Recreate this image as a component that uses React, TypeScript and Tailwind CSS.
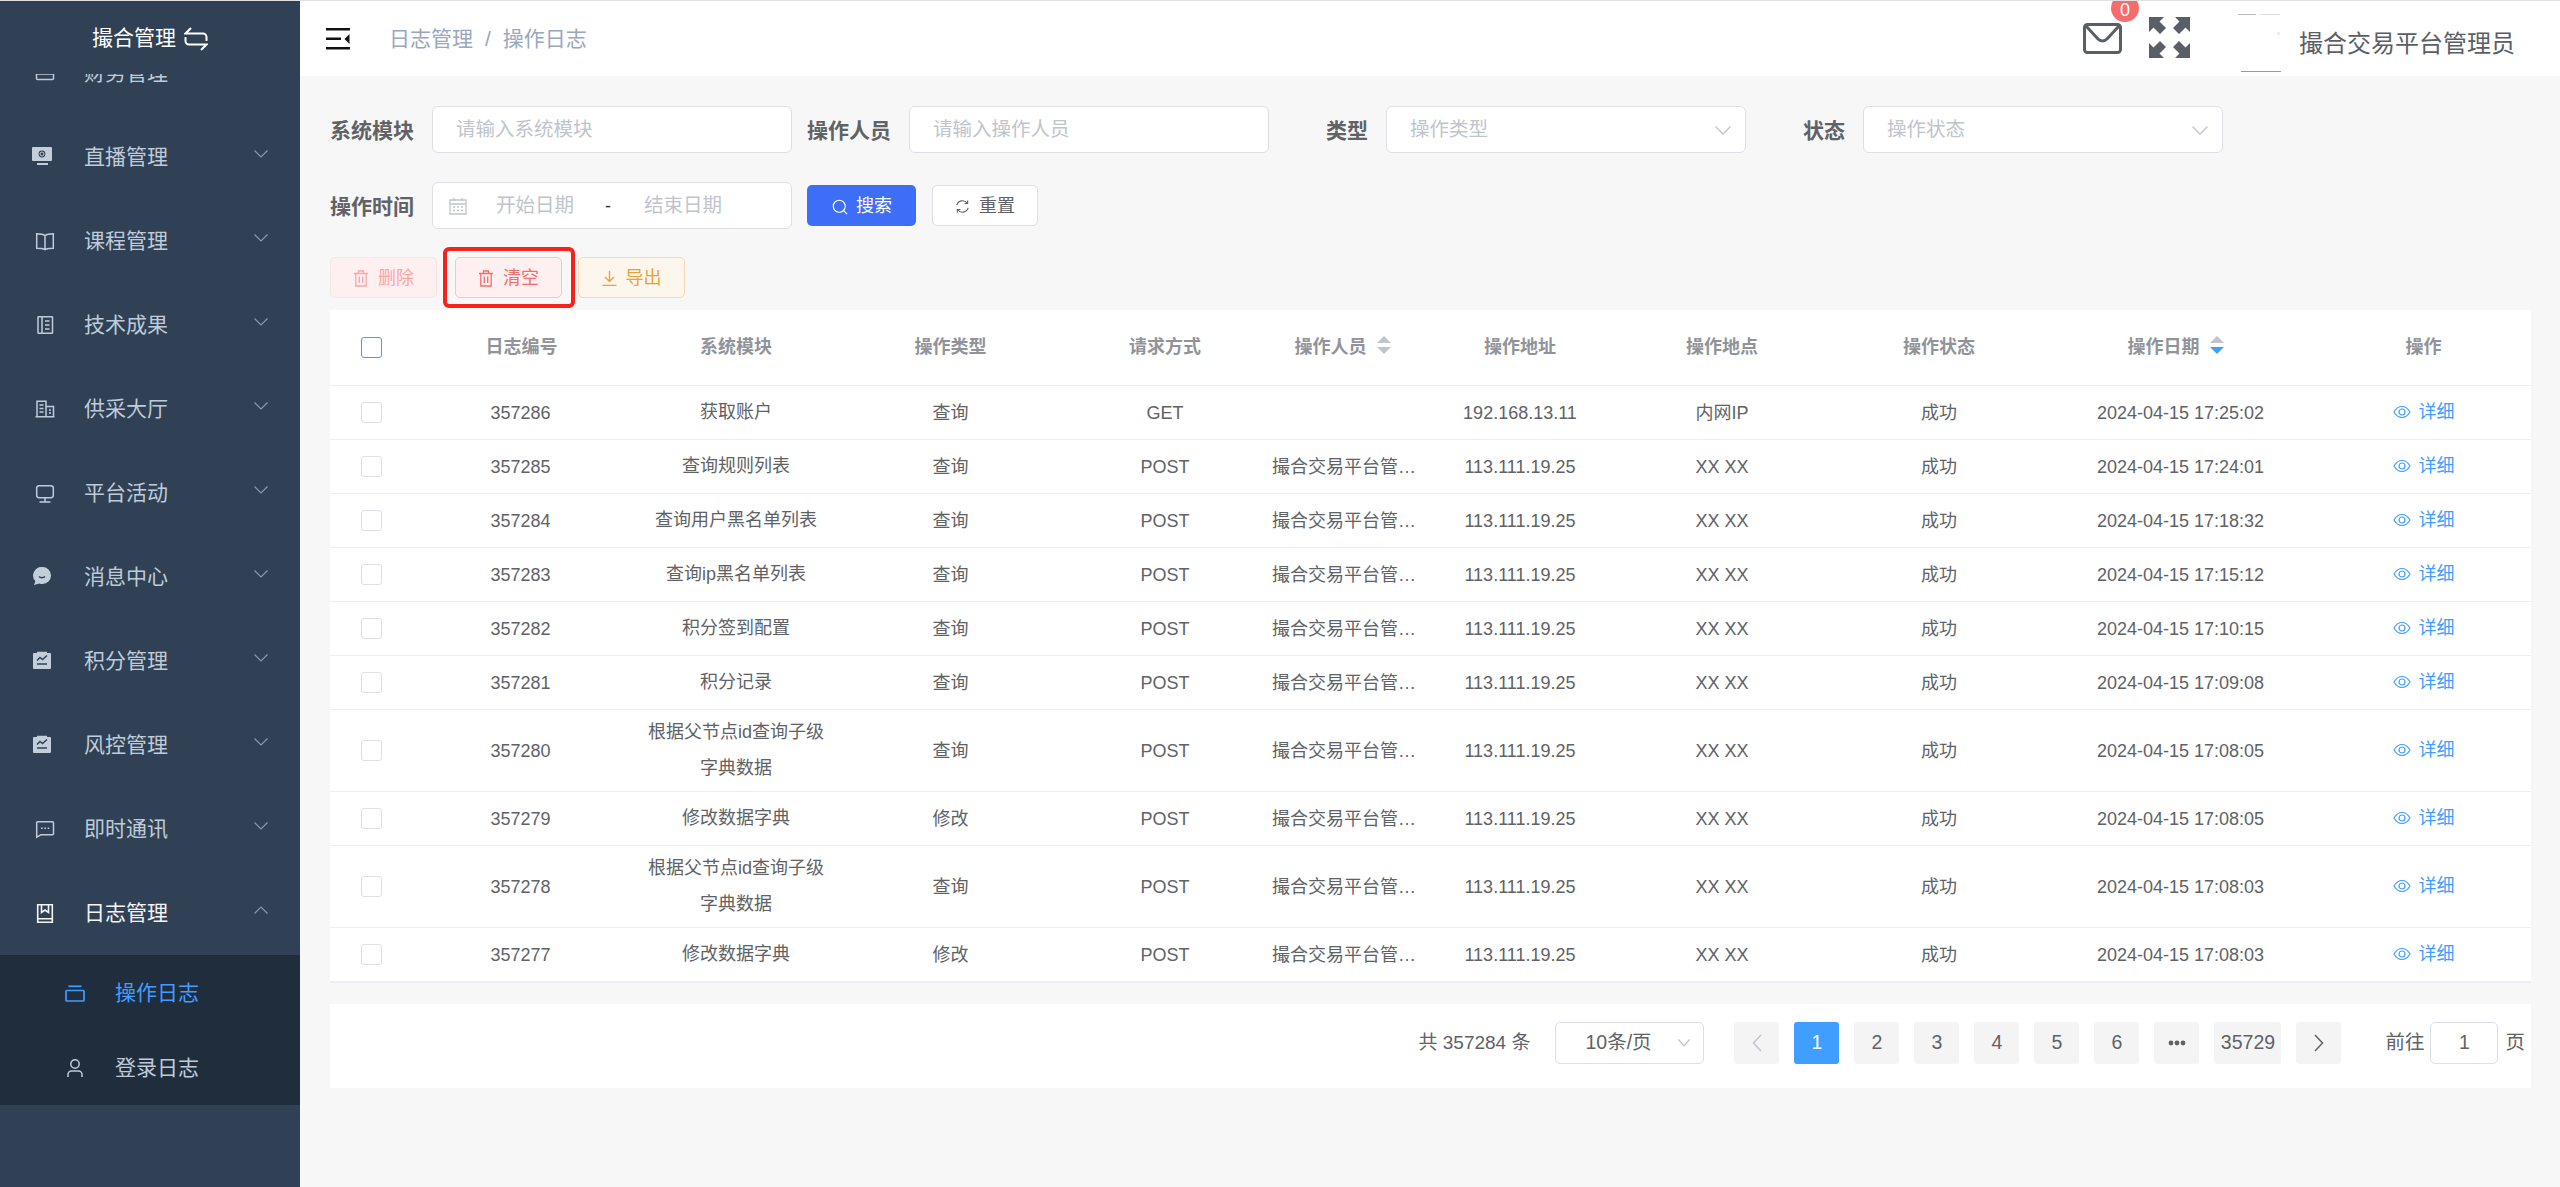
import React from "react";
import { Search } from "lucide-react";

type SvgProps = { children: React.ReactNode; className?: string };
const Ico = ({ children, className = "" }: SvgProps) => (
  <svg viewBox="0 0 24 24" fill="none" stroke="currentColor" strokeWidth="1.5" className={`w-[24px] h-[24px] shrink-0 ${className}`}>
    {children}
  </svg>
);

const icons: Record<string, React.ReactNode> = {
  finance: <Ico><rect x="4.5" y="3" width="17" height="15.5" rx="1" /><path d="M4.5 13h17" /></Ico>,
  live: (
    <Ico>
      <path fill="#c3cedb" stroke="none" fillRule="evenodd" d="M1 2h18a1 1 0 0 1 1 1v12a1 1 0 0 1-1 1H1a1 1 0 0 1-1-1V3a1 1 0 0 1 1-1Zm9 3.6a3.4 3.4 0 1 0 0 6.8 3.4 3.4 0 0 0 0-6.8Z" />
      <circle cx="10" cy="9" r="2" fill="#304156" stroke="#c3cedb" strokeWidth="1" />
      <rect x="5" y="18" width="11" height="2" fill="#c3cedb" stroke="none" />
    </Ico>
  ),
  course: <Ico><path d="M13 6.5C11 5 8 4.7 4.7 4.7v14.6c3.3 0 6.3.3 8.3 1.2 2-.9 5-1.2 8.3-1.2V4.7C18 4.7 15 5 13 6.5Zm0 0v14" /></Ico>,
  tech: <Ico><rect x="6" y="3.7" width="14.5" height="16.6" rx=".6" /><path d="M10 3.7v16.6M13 8h4.5M13 12h4.5M13 16h4.5" /></Ico>,
  supply: <Ico><path d="M5 19.5V4.2h9v15.3M14 9.5h7.5v10M3.5 19.8h19M7.5 8h4M7.5 11.5h4M7.5 15h4M17 13h2M17 16h2" /></Ico>,
  monitor: <Ico><rect x="4.7" y="4.7" width="16.6" height="12" rx="2.4" /><path d="M13 16.7v4M7.5 21h11" /></Ico>,
  chat: (
    <Ico>
      <path fill="#c3cedb" stroke="none" d="M10.5 2a8.5 8.5 0 0 1 0 17c-1.1 0-2.200-.2-3.100-.6L2 20l1.400-3.800A8.500 8.500 0 0 1 10.500 2Z" />
      <path d="M7 11.500c1.500 1.500 4.500 1.500 6 0" stroke="#304156" strokeWidth="1.500" />
    </Ico>
  ),
  chart: (
    <Ico>
      <path fill="#c3cedb" stroke="none" d="M2 4h3V2.800h10V4h3a1 1 0 0 1 1 1v14a1 1 0 0 1-1 1H2a1 1 0 0 1-1-1V5a1 1 0 0 1 1-1Z" />
      <path d="M5 11.500l3-3 2.500 2 4.500-4" stroke="#304156" strokeWidth="1.500" />
      <path d="M5 15h10" stroke="#304156" strokeWidth="1.500" />
    </Ico>
  ),
  im: <Ico><path d="M5.500 4.700h15a1 1 0 0 1 1 1v11a1 1 0 0 1-1 1H9l-4.300 2.500V5.500a.8.800 0 0 1 .8-.8Z" /><path d="M9 11.200h1.600M12.300 11.200h1.600M15.600 11.200h1.600" strokeWidth="1.600" /></Ico>,
  log: <Ico><path d="M5.700 3.700h14.600v17.600H5.700zM5.700 17.800h14.600M9.500 3.700v7.800l3.500-2.500 3.500 2.500V3.700" strokeWidth="1.600" /></Ico>,
  card: <Ico><rect x="3" y="9.500" width="18" height="10.500" rx=".8" strokeWidth="1.700" /><path d="M5.500 5.300h13" strokeWidth="1.700" /></Ico>,
  user: <Ico><circle cx="12" cy="8" r="4.200" /><path d="M5 21v-2.500a3.500 3.500 0 0 1 3.500-3.500h7a3.500 3.500 0 0 1 3.500 3.500V21" /></Ico>,
};

const Chevron = ({ up = false }: { up?: boolean }) => (
  <svg viewBox="0 0 14 8" fill="none" stroke="#8c97a6" strokeWidth="1.200" className="w-[14px] h-[8px] ml-auto -translate-y-[3px]">
    <path d={up ? "M.5 7.500 7 1l6.500 6.500" : "M.5.500 7 7 13.500.500"} />
  </svg>
);

const menu = [
  ["finance", "财务管理"],
  ["live", "直播管理"],
  ["course", "课程管理"],
  ["tech", "技术成果"],
  ["supply", "供采大厅"],
  ["monitor", "平台活动"],
  ["chat", "消息中心"],
  ["chart", "积分管理"],
  ["chart", "风控管理"],
  ["im", "即时通讯"],
];

const Sidebar = () => (
  <aside className="w-[300px] shrink-0 bg-[#304156] flex flex-col overflow-hidden">
    <div className="h-[73px] shrink-0 flex items-center justify-center gap-[8px] text-white text-[21px] relative z-10 bg-[#304156]">
      <span>撮合管理</span>
      <svg viewBox="0 0 24 24" fill="none" stroke="currentColor" strokeWidth="2" className="w-[24px] h-[24px] mt-[3px]">
        <path d="M7 1 1.500 6.500H19a3.500 3.500 0 0 1 3.500 3.500v4" />
        <path d="M17 23l5.500-5.500H5A3.500 3.500 0 0 1 1.500 14v-4" />
      </svg>
    </div>
    <nav className="flex-1 overflow-hidden">
      <ul className="-mt-[43px]">
        {menu.map(([ic, label]) => (
          <li key={label} className="h-[84px] flex items-center pl-[32px] pr-[32px] text-[21px] text-[#bfcbd9]">
            {icons[ic]}
            <span className="ml-[28px]">{label}</span>
            <Chevron />
          </li>
        ))}
        <li>
          <div className="h-[84px] flex items-center pl-[32px] pr-[32px] text-[21px] text-[#f4f4f5]">
            {icons.log}
            <span className="ml-[28px]">日志管理</span>
            <Chevron up />
          </div>
          <ul className="bg-[#1f2d3d]">
            <li className="h-[75px] flex items-center pl-[63px] text-[21px] text-[#409eff]">
              {icons.card}
              <span className="ml-[28px]">操作日志</span>
            </li>
            <li className="h-[75px] flex items-center pl-[63px] text-[21px] text-[#bfcbd9]">
              {icons.user}
              <span className="ml-[28px]">登录日志</span>
            </li>
          </ul>
        </li>
      </ul>
    </nav>
  </aside>
);

const Corner = ({ t }: { t: string }) => (
  <path transform={t} fill="#5a5e66" d="M0 0H15L10.500 4.500 17 11 11 17 4.500 10.500 0 15Z" />
);

const Header = () => (
  <header className="h-[75px] shrink-0 bg-white flex items-center overflow-hidden">
    <svg viewBox="0 0 24 22" className="ml-[26px] w-[24px] h-[22px]">
      <rect x="0" y="0" width="24" height="2.500" fill="#111" />
      <rect x="0" y="9.500" width="15" height="2.500" fill="#111" />
      <rect x="0" y="19" width="24" height="2.500" fill="#111" />
      <path d="M23.500 6v10l-5-5Z" fill="#111" />
    </svg>
    <nav className="ml-[39px] flex items-center text-[21px] text-[#97a8be]">
      <span>日志管理</span>
      <span className="mx-[12px]">/</span>
      <span>操作日志</span>
    </nav>
    <div className="ml-auto flex items-center pr-[45px]">
      <div className="relative w-[39px] h-[31px]">
        <svg viewBox="0 0 39 31" fill="none" stroke="#5a5e66" strokeWidth="3" className="w-[39px] h-[31px]">
          <rect x="1.500" y="1.500" width="36" height="28" rx="3" />
          <path d="M3 3l12 13c2.500 2.500 6.500 2.500 9 0L36 3" />
        </svg>
        <span className="absolute left-[28px] -top-[29px] w-[28px] h-[28px] pt-[5px] rounded-full bg-[#f56c6c] text-white text-[18px] flex items-center justify-center">0</span>
      </div>
      <svg viewBox="0 0 41 41" className="ml-[27px] w-[41px] h-[41px] -translate-y-[1px]">
        <Corner t="" />
        <Corner t="translate(41 0) scale(-1 1)" />
        <Corner t="translate(0 41) scale(1 -1)" />
        <Corner t="translate(41 41) scale(-1 -1)" />
      </svg>
      <svg viewBox="0 0 60 60" className="ml-[42px] w-[60px] h-[60px] translate-y-[3px]">
        <rect x="6" y="2" width="18" height="1" fill="#bbb" />
        <rect x="28" y="2" width="20" height="1" fill="#ddd" />
        <rect x="45" y="20" width="3" height="3" fill="#e4eef8" />
        <rect x="9" y="59" width="40" height="1" fill="#999" />
      </svg>
      <span className="ml-[7px] text-[24px] text-[#5a5e66] translate-y-[5px]">撮合交易平台管理员</span>
    </div>
  </header>
);

const Down = () => (
  <svg viewBox="0 0 16 9" fill="none" stroke="#c0c4cc" strokeWidth="1.300" className="w-[16px] h-[9px]">
    <path d="M.5.500 8 8 15.500.500" />
  </svg>
);

const Label = ({ children }: { children: React.ReactNode }) => (
  <label className="w-[102px] shrink-0 pr-[18px] pt-[2px] text-right text-[21px] font-semibold text-[#606266] whitespace-nowrap">{children}</label>
);

const Box = "w-[360px] h-[47px] shrink-0 bg-white border border-[#dcdfe6] rounded-[6px] flex items-center pt-[1px] text-[19.5px] text-[#c0c4cc]";

const Field = ({ label, placeholder, select = false }: { label: string; placeholder: string; select?: boolean }) => (
  <div className="flex items-center mr-[15px]">
    <Label>{label}</Label>
    <div className={`${Box} pl-[23px] pr-[14px]`}>
      <span>{placeholder}</span>
      {select && <span className="ml-auto"><Down /></span>}
    </div>
  </div>
);

const Trash = ({ className = "" }: { className?: string }) => (
  <svg viewBox="0 0 16 17" fill="none" stroke="currentColor" strokeWidth="1.300" className={`w-[16px] h-[17px] ${className}`}>
    <path d="M1 3.500h14M5.500 3.500V1h5v2.500M2.800 3.500V16h10.400V3.500M6.300 6.500v6.500M9.700 6.500v6.500" />
  </svg>
);

const Btn = ({ className, children }: { className: string; children: React.ReactNode }) => (
  <button className={`h-[41px] w-[107px] rounded-[5px] border pt-[2px] flex items-center justify-center gap-[9px] text-[18px] ${className}`}>{children}</button>
);

const Filters = () => (
  <div>
    <div className="flex items-center mb-[29px]">
      <Field label="系统模块" placeholder="请输入系统模块" />
      <Field label="操作人员" placeholder="请输入操作人员" />
      <Field label="类型" placeholder="操作类型" select />
      <Field label="状态" placeholder="操作状态" select />
    </div>
    <div className="flex items-center mb-[28px]">
      <Label>操作时间</Label>
      <div className={`${Box} pl-[16px] mr-[15px]`}>
        <svg viewBox="0 0 18 18" fill="none" stroke="#c0c4cc" strokeWidth="1.300" className="w-[18px] h-[18px]">
          <path d="M1 3h16v14H1zM1 7h16M5 1v3M13 1v3" />
          <path d="M4 10h2M8 10h2M12 10h2M4 13.500h2M8 13.500h2M12 13.500h2" />
        </svg>
        <span className="ml-[29px]">开始日期</span>
        <span className="ml-[31px] text-[#303133] text-[18px]">-</span>
        <span className="ml-[33px]">结束日期</span>
      </div>
      <button className="h-[41px] w-[109px] rounded-[5px] bg-[#3e6ef5] pt-[2px] text-white text-[18px] flex items-center justify-center gap-[7px]">
        <Search size={18} strokeWidth={1.500} />
        搜索
      </button>
      <button className="ml-[16px] h-[41px] w-[106px] rounded-[5px] bg-white border border-[#dcdfe6] pt-[2px] text-[#606266] text-[18px] flex items-center justify-center gap-[9px]">
        <svg viewBox="0 0 16 16" fill="none" stroke="currentColor" strokeWidth="1.200" className="w-[15px] h-[15px]">
          <path d="M2 6.500A6.200 6.200 0 0 1 13 4.500M14 9.500A6.200 6.200 0 0 1 3 11.500" />
          <path d="M13.500 1.500v3.300h-3.300M2.500 14.500v-3.300h3.300" />
        </svg>
        重置
      </button>
    </div>
    <div className="flex items-center mb-[12px]">
      <Btn className="bg-[#fef0f0] border-[#fde2e2] text-[#f9a7a7]"><Trash />删除</Btn>
      <div className="relative ml-[18px] mr-[16px]">
        <Btn className="bg-[#fef0f0] border-[#fbc4c4] text-[#f56c6c]"><Trash />清空</Btn>
        <span className="absolute -left-[12px] -right-[13px] -top-[10px] -bottom-[10px] border-[4px] border-[#f5231b] rounded-[6px] pointer-events-none" />
      </div>
      <Btn className="bg-[#fdf6ec] border-[#f5dab1] text-[#e6a23c]">
        <svg viewBox="0 0 15 15" fill="none" stroke="currentColor" strokeWidth="1.300" className="w-[15px] h-[15px]">
          <path d="M7.500 0v10M3 6l4.500 4.500L12 6M0.500 14.300h14" />
        </svg>
        导出
      </Btn>
    </div>
  </div>
);

const Sort = ({ active = false }: { active?: boolean }) => (
  <svg viewBox="0 0 14 18" className="inline-block w-[14px] h-[18px] ml-[10px] align-[-1px]">
    <path d="M7 0l7 7H0Z" fill="#c0c4cc" />
    <path d="M0 11h14l-7 7Z" fill={active ? "#409eff" : "#c0c4cc"} />
  </svg>
);

const Check = ({ on = false }: { on?: boolean }) => (
  <span className={`block mx-auto w-[21px] h-[21px] rounded-[3px] bg-white border ${on ? "border-[#409eff]" : "border-[#dcdfe6]"}`} />
);

const M1 = "根据父节点id查询子级字典数据";
const U = "撮合交易平台管理员";
const rows = [
  ["357286", "获取账户", "查询", "GET", "", "192.168.13.11", "内网IP", "2024-04-15 17:25:02"],
  ["357285", "查询规则列表", "查询", "POST", U, "113.111.19.25", "XX XX", "2024-04-15 17:24:01"],
  ["357284", "查询用户黑名单列表", "查询", "POST", U, "113.111.19.25", "XX XX", "2024-04-15 17:18:32"],
  ["357283", "查询ip黑名单列表", "查询", "POST", U, "113.111.19.25", "XX XX", "2024-04-15 17:15:12"],
  ["357282", "积分签到配置", "查询", "POST", U, "113.111.19.25", "XX XX", "2024-04-15 17:10:15"],
  ["357281", "积分记录", "查询", "POST", U, "113.111.19.25", "XX XX", "2024-04-15 17:09:08"],
  ["357280", M1, "查询", "POST", U, "113.111.19.25", "XX XX", "2024-04-15 17:08:05"],
  ["357279", "修改数据字典", "修改", "POST", U, "113.111.19.25", "XX XX", "2024-04-15 17:08:05"],
  ["357278", M1, "查询", "POST", U, "113.111.19.25", "XX XX", "2024-04-15 17:08:03"],
  ["357277", "修改数据字典", "修改", "POST", U, "113.111.19.25", "XX XX", "2024-04-15 17:08:03"],
];

const th = "h-[76px] border-b border-[#ebeef5] font-semibold text-[#909399] text-center pb-[1px]";
const td = "h-[54px] border-b border-[#ebeef5] text-center";

const Table = () => (
  <table className="w-full table-fixed border-separate border-spacing-0 bg-white text-[18px] leading-[36px] text-[#606266] mb-[21px] border-b border-[#ebeef5]">
    <colgroup>
      <col className="w-[84px]" />
      <col className="w-[215px]" />
      <col className="w-[214px]" />
      <col className="w-[215px]" />
      <col className="w-[214px]" />
      <col className="w-[157px]" />
      <col className="w-[182px]" />
      <col className="w-[222px]" />
      <col className="w-[212px]" />
      <col className="w-[271px]" />
      <col className="w-[215px]" />
    </colgroup>
    <thead>
      <tr>
        <th className={`${th} pr-[2px]`}><Check on /></th>
        <th className={th}>日志编号</th>
        <th className={th}>系统模块</th>
        <th className={th}>操作类型</th>
        <th className={th}>请求方式</th>
        <th className={`${th} pr-[16px]`}>操作人员<Sort /></th>
        <th className={th}>操作地址</th>
        <th className={th}>操作地点</th>
        <th className={th}>操作状态</th>
        <th className={`${th} pr-[10px]`}>操作日期<Sort active /></th>
        <th className={th}>操作</th>
      </tr>
    </thead>
    <tbody>
      {rows.map((r) => (
        <tr key={r[0]}>
          <td className={`${td} pr-[2px]`}><Check /></td>
          <td className={`${td} pr-[2px]`}>{r[0]}</td>
          <td className={`${td} px-[15px] pt-[4px] pb-[5px]`}>{r[1]}</td>
          <td className={td}>{r[2]}</td>
          <td className={td}>{r[3]}</td>
          <td className={`${td} pr-[12px]`}>
            <div className="truncate">{r[4]}</div>
          </td>
          <td className={td}>{r[5]}</td>
          <td className={td}>{r[6]}</td>
          <td className={td}>成功</td>
          <td className={td}>{r[7]}</td>
          <td className={td}>
            <span className="inline-flex items-center gap-[8px] text-[#409eff]">
              <svg viewBox="0 0 18 14" fill="none" stroke="currentColor" strokeWidth="1.200" className="w-[18px] h-[14px]">
                <path d="M1 7c2-3.500 5-5.500 8-5.500S15 3.500 17 7c-2 3.500-5 5.500-8 5.500S3 10.500 1 7Z" />
                <circle cx="9" cy="7" r="3" />
              </svg>
              详细
            </span>
          </td>
        </tr>
      ))}
    </tbody>
  </table>
);

const Page = ({ children, active = false, className = "w-[45px]" }: { children: React.ReactNode; active?: boolean; className?: string }) => (
  <span className={`h-[42px] rounded-[3px] flex items-center justify-center ${className} ${active ? "bg-[#409eff] text-white" : "bg-[#f4f4f5] text-[#606266]"}`}>{children}</span>
);

const Pagination = () => (
  <div className="h-[84px] bg-white flex items-center justify-end pr-[6px] pb-[6px] text-[19.5px] text-[#606266]">
    <span className="whitespace-nowrap text-[19px]">共 357284 条</span>
    <div className="ml-[25px] w-[149px] h-[42px] rounded-[5px] border border-[#dcdfe6] flex items-center pl-[29px] pr-[13px]">
      <span className="whitespace-nowrap">10条/页</span>
      <span className="ml-auto">
        <svg viewBox="0 0 12 8" fill="none" stroke="#c0c4cc" strokeWidth="1.200" className="w-[12px] h-[8px]"><path d="M.5.500 6 7 11.500.500" /></svg>
      </span>
    </div>
    <div className="ml-[30px] flex items-center gap-[15px]">
      <Page>
        <svg viewBox="0 0 10 18" fill="none" stroke="#c0c4cc" strokeWidth="1.500" className="w-[10px] h-[18px]"><path d="M9 1 1.500 9 9 17" /></svg>
      </Page>
      <Page active>1</Page>
      <Page>2</Page>
      <Page>3</Page>
      <Page>4</Page>
      <Page>5</Page>
      <Page>6</Page>
      <Page>
        <svg viewBox="0 0 18 6" className="w-[18px] h-[6px]" fill="#606266">
          <circle cx="3" cy="3" r="2.400" />
          <circle cx="9" cy="3" r="2.400" />
          <circle cx="15" cy="3" r="2.400" />
        </svg>
      </Page>
      <Page className="w-[67px]">35729</Page>
      <Page>
        <svg viewBox="0 0 10 18" fill="none" stroke="#606266" strokeWidth="1.500" className="w-[10px] h-[18px]"><path d="M1 1l7.500 8L1 17" /></svg>
      </Page>
    </div>
    <span className="ml-[44px] whitespace-nowrap">前往</span>
    <div className="ml-[6px] w-[68px] h-[42px] rounded-[5px] border border-[#dcdfe6] flex items-center justify-center">1</div>
    <span className="ml-[7px]">页</span>
  </div>
);

export default function App() {
  return (
    <div className="h-screen w-full flex flex-col overflow-hidden font-['Liberation_Sans','Noto_Sans_CJK_SC',sans-serif]">
      <div className="h-[1px] shrink-0 bg-[#e0e0e0]" />
      <div className="flex-1 flex min-h-0">
        <Sidebar />
        <main className="flex-1 min-w-0 bg-[#f7f7f7] flex flex-col">
          <Header />
          <div className="pt-[30px] pl-[30px] pr-[29px]">
            <Filters />
            <Table />
            <Pagination />
          </div>
        </main>
      </div>
    </div>
  );
}
